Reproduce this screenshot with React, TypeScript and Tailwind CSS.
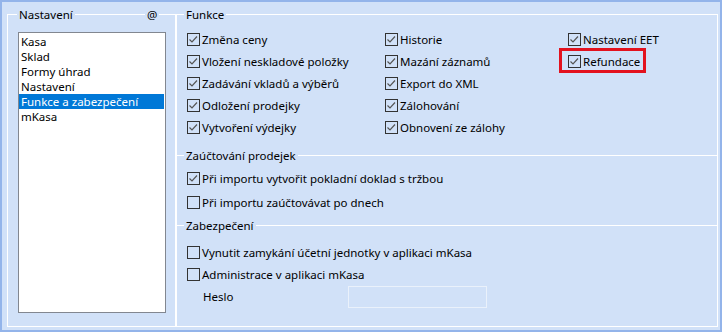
import React from 'react';

const items = ['Kasa', 'Sklad', 'Formy úhrad', 'Nastavení', 'Funkce a zabezpečení', 'mKasa'];

const Box = ({ checked }: { checked?: boolean }) => (
  <svg width="13" height="13" viewBox="0 0 13 13" className="shrink-0">
    <rect x="0.5" y="0.5" width="12" height="12" fill="none" stroke="#333333" />
    {checked && <path d="M2.5 6.5 L5 9 L10 3.5" fill="none" stroke="#555555" strokeWidth="1.2" />}
  </svg>
);

const Check = ({ label, checked = true, h = 'h-[22px]' }: { label: string; checked?: boolean; h?: string }) => (
  <div className={`flex items-center gap-[2px] ${h}`}>
    <Box checked={checked} />
    <span className="whitespace-nowrap leading-[15px]">{label}</span>
  </div>
);

const Legend = ({ children, className = '' }: { children: React.ReactNode; className?: string }) => (
  <span className={`absolute top-[-8px] bg-[#d1e1f8] px-[2px] leading-[15px] ${className}`}>{children}</span>
);

export default function App() {
  return (
    <div
      className="w-[722px] h-[332px] bg-[#d1e1f8] border-2 border-[#93b4ea] pl-[5px] pr-[2px] pt-[12px] pb-[3px] flex text-[11.5px] text-black"
      style={{ fontFamily: '"Noto Sans", "Open Sans", sans-serif' }}
    >
      {/* left group */}
      <div className="relative w-[169px] h-full border border-white pl-[10px] pt-[17px]">
        <Legend className="left-[9px]">Nastavení</Legend>
        <Legend className="left-[137px]">@</Legend>
        <div className="w-[148px] h-[281px] bg-white border border-[#828790] pt-[1px]">
          {items.map((it, i) => (
            <div
              key={it}
              className={`h-[15px] leading-[15px] pl-[2px] whitespace-nowrap overflow-hidden ${i === 4 ? 'bg-[#0078d7] text-white mr-[1px]' : ''}`}
            >
              {it}
            </div>
          ))}
        </div>
      </div>

      {/* right group */}
      <div className="flex-1 h-full border border-white border-l-0 flex flex-col">
        <div className="relative h-[140px] border-l border-white pt-[13px] pl-[10px] flex">
          <Legend className="left-[7px]">Funkce</Legend>
          <div className="w-[198px] flex flex-col">
            <Check label="Změna ceny" />
            <Check label="Vložení neskladové položky" />
            <Check label="Zadávání vkladů a výběrů" />
            <Check label="Odložení prodejky" />
            <Check label="Vytvoření výdejky" />
          </div>
          <div className="w-[183px] flex flex-col">
            <Check label="Historie" />
            <Check label="Mazání záznamů" />
            <Check label="Export do XML" />
            <Check label="Zálohování" />
            <Check label="Obnovení ze zálohy" />
          </div>
          <div className="flex flex-col">
            <Check label="Nastavení EET" />
            <div className="relative">
              <Check label="Refundace" />
              <div className="absolute left-[-9px] top-[-2px] w-[87px] h-[25px] border-[3px] border-[#e3121e]" />
            </div>
          </div>
        </div>

        <div className="relative h-[70px] border-t border-l border-white pt-[10px] pl-[10px]">
          <Legend className="left-[7px]">Zaúčtování prodejek</Legend>
          <Check label="Při importu vytvořit pokladní doklad s tržbou" h="h-[24px]" />
          <Check label="Při importu zaúčtovávat po dnech" checked={false} h="h-[24px]" />
        </div>

        <div className="relative flex-1 border-t border-l border-white pt-[15px] pl-[10px]">
          <Legend className="left-[7px]">Zabezpečení</Legend>
          <Check label="Vynutit zamykání účetní jednotky v aplikaci mKasa" checked={false} />
          <Check label="Administrace v aplikaci mKasa" checked={false} />
          <div className="flex items-center h-[24px] pl-[16px]">
            <span className="w-[145px]">Heslo</span>
            <div className="w-[139px] h-[22px] border border-[#eaf1fb] bg-[#d1e1f8]" />
          </div>
        </div>
      </div>
    </div>
  );
}
